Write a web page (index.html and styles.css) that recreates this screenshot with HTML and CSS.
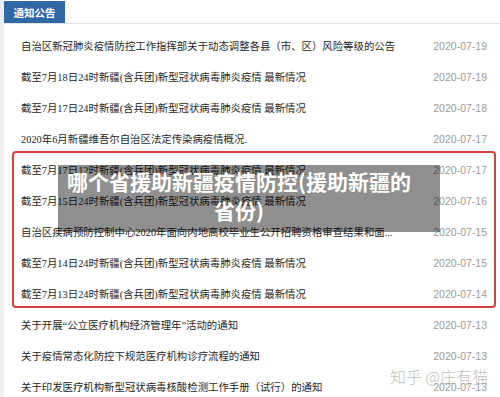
FILE: index.html
```html
<!DOCTYPE html>
<html lang="zh-CN">
<head>
    <meta charset="UTF-8">
    <meta name="viewport" content="width=device-width, initial-scale=1.0">
    <title>通知公告</title>
    <link rel="stylesheet" href="styles.css">
</head>
<body>
    <div class="panel">
        <div class="tabs">
            <div class="tab">通知公告</div>
        </div>
        <ul class="list">
            <li class="row"><span class="title">自治区新冠肺炎疫情防控工作指挥部关于动态调整各县（市、区）风险等级的公告</span><span class="date">2020-07-19</span></li>
            <li class="row"><span class="title">截至7月18日24时新疆(含兵团)新型冠状病毒肺炎疫情 最新情况</span><span class="date">2020-07-19</span></li>
            <li class="row"><span class="title">截至7月17日24时新疆(含兵团)新型冠状病毒肺炎疫情 最新情况</span><span class="date">2020-07-18</span></li>
            <li class="row"><span class="title">2020年6月新疆维吾尔自治区法定传染病疫情概况.</span><span class="date">2020-07-17</span></li>
            <li class="row"><span class="title">截至7月17日12时新疆(含兵团)新型冠状病毒肺炎疫情 最新情况</span><span class="date">2020-07-17</span></li>
            <li class="row"><span class="title">截至7月15日24时新疆(含兵团)新型冠状病毒肺炎疫情 最新情况</span><span class="date">2020-07-16</span></li>
            <li class="row"><span class="title">自治区疾病预防控制中心2020年面向内地高校毕业生公开招聘资格审查结果和面...</span><span class="date">2020-07-15</span></li>
            <li class="row"><span class="title">截至7月14日24时新疆(含兵团)新型冠状病毒肺炎疫情 最新情况</span><span class="date">2020-07-15</span></li>
            <li class="row"><span class="title">截至7月13日24时新疆(含兵团)新型冠状病毒肺炎疫情 最新情况</span><span class="date">2020-07-14</span></li>
            <li class="row"><span class="title">关于开展“公立医疗机构经济管理年”活动的通知</span><span class="date">2020-07-13</span></li>
            <li class="row"><span class="title">关于疫情常态化防控下规范医疗机构诊疗流程的通知</span><span class="date">2020-07-13</span></li>
            <li class="row"><span class="title">关于印发医疗机构新型冠状病毒核酸检测工作手册（试行）的通知</span><span class="date">2020-07-13</span></li>
        </ul>

        <!-- annotation drawn over the list -->
        <div class="mark"></div>
        <div class="caption">哪个省援助新疆疫情防控(援助新疆的省份)</div>
        <div class="watermark">知乎 @庄有猫</div>
    </div>
</body>
</html>
```

FILE: styles.css
```css
*{
    margin: 0;
    padding: 0;
    box-sizing: border-box;
}

body{
    background-color: #eeeeee;
    font-family: "Liberation Serif", "Noto Sans CJK SC", serif;
    height: 397px;
    overflow: hidden;
}

.panel{
    position: relative;
    margin-left: 4px;
    background-color: #fff;
    height: 397px;
}

.tabs{
    display: flex;
    height: 24px;
    padding-top: 1px;
    border-bottom: 1px solid #e2e2e2;
}

.tab{
    width: 61px;
    background-color: #2f68a4;
    color: #fff;
    font-size: 10.5px;
    font-weight: bold;
    display: flex;
    align-items: center;
    justify-content: center;
}

.list{
    list-style: none;
    padding: 6px 13px 0 17px;
}

.row{
    display: flex;
    justify-content: space-between;
    align-items: center;
    height: 31px;
    font-size: 10.4px;
    color: #262626;
}

.title{
    white-space: nowrap;
}

.date{
    font-family: "Liberation Sans", sans-serif;
    font-size: 10.5px;
    color: #9a9a9a;
}

.mark{
    position: absolute;
    left: 8px;
    top: 151px;
    width: 484px;
    height: 157px;
    border: 2px solid #d9403b;
    border-radius: 4px;
}

.caption{
    position: absolute;
    left: 54px;
    top: 165px;
    width: 382px;
    height: 67px;
    padding: 2px 26px 0 6px;
    background-color: rgba(0, 0, 0, 0.44);
    color: #fff;
    font-family: "Noto Sans CJK SC", sans-serif;
    font-weight: bold;
    font-size: 21px;
    line-height: 29px;
    text-align: center;
}

.watermark{
    position: absolute;
    right: 12px;
    top: 364px;
    font-family: "Noto Sans CJK SC", sans-serif;
    font-size: 16px;
    font-weight: 300;
    color: rgba(160, 160, 160, 0.7);
}
```
